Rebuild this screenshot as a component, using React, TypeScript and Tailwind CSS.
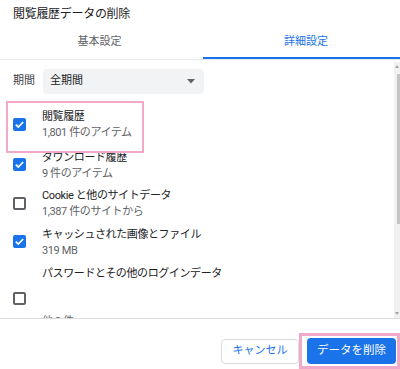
import React from "react";

function Check({ checked }: { checked: boolean }) {
  if (checked) {
    return (
      <div className="w-[13px] h-[13px] shrink-0 rounded-[2px] bg-[#1a73e8] flex items-center justify-center">
        <svg width="13" height="13" viewBox="0 0 13 13">
          <polyline points="2.8,6.6 5.3,9 10.2,4" fill="none" stroke="#ffffff" strokeWidth="1.7" />
        </svg>
      </div>
    );
  }
  return <div className="w-[13px] h-[13px] shrink-0 rounded-[2px] border-2 border-[#5f6368] bg-white" />;
}

function Item({ checked, label, sub, pl = "pl-[13px]" }: { checked: boolean; label: string; sub: string; pl?: string }) {
  return (
    <div className={`flex items-center shrink-0 h-[38.5px] py-[3px] ${pl}`}>
      <Check checked={checked} />
      <div className="ml-[16px] flex flex-col pt-[2px]">
        <div className="h-[16px] leading-[16px] text-[11px] text-[#202124] tracking-[-0.4px] whitespace-nowrap">{label}</div>
        <div className="h-[16px] leading-[16px] text-[11px] text-[#5f6368] tracking-[-0.4px] whitespace-nowrap">{sub}</div>
      </div>
    </div>
  );
}

export default function App() {
  return (
    <div className="w-[400px] h-[369px] overflow-hidden bg-white font-['Roboto','Noto_Sans_CJK_JP',sans-serif] flex flex-col">
      <div className="h-[28px] shrink-0 pl-[13px] flex items-center text-[12px] text-[#202124] tracking-[-0.3px]">
        閲覧履歴データの削除
      </div>
      <div className="h-[31px] shrink-0 flex">
        <div className="w-[203px] flex items-center justify-center pr-[4px] text-[11px] text-[#5f6368] border-b-2 border-transparent">
          基本設定
        </div>
        <div className="flex-1 flex items-center justify-center pl-[9px] text-[11px] text-[#1a73e8] border-b-2 border-[#1a73e8]">
          詳細設定
        </div>
      </div>
      <div className="h-px shrink-0 bg-[#e8eaed]" />
      <div className="relative h-[258px] shrink-0 overflow-hidden flex">
        <div className="w-[394px] flex flex-col">
          <div className="mt-[9px] h-[25px] shrink-0 flex items-center">
            <div className="w-[43px] pl-[13px] text-[11px] text-[#3c4043]">期間</div>
            <div className="w-[161px] h-[25px] rounded-[4px] bg-[#f1f3f4] flex items-center justify-between pl-[7px] pr-[9px]">
              <span className="text-[11px] text-[#202124]">全期間</span>
              <svg width="8" height="5" viewBox="0 0 8 5">
                <polygon points="0,0 8,0 4,4.5" fill="#5f6368" />
              </svg>
            </div>
          </div>
          <div className="relative z-10 shrink-0 mt-[7px] ml-[6px] w-[138px] h-[52px] border-2 border-[#f2a9c9] bg-white pt-[2px]">
            <Item checked label="閲覧履歴" sub="1,801 件のアイテム" pl="pl-[5px]" />
          </div>
          <div className="mt-[-7.5px] shrink-0">
            <Item checked label="ダウンロード履歴" sub="9 件のアイテム" />
          </div>
          <Item checked={false} label="Cookie と他のサイトデータ" sub="1,387 件のサイトから" />
          <Item checked label="キャッシュされた画像とファイル" sub="319 MB" />
          <div className="flex items-start shrink-0 pl-[13px] pt-[3px]">
            <div className="mt-[28px]">
              <Check checked={false} />
            </div>
            <div className="ml-[16px] flex flex-col pt-[2px]">
              <div className="h-[16px] leading-[16px] text-[11px] text-[#202124] tracking-[-0.4px] whitespace-nowrap">
                パスワードとその他のログインデータ
              </div>
              <div className="h-[32px]" />
              <div className="h-[16px] leading-[16px] text-[11px] text-[#5f6368] tracking-[-0.4px] whitespace-nowrap">
                他 3 件
              </div>
            </div>
          </div>
        </div>
        <div className="w-[6px] mt-[2px] bg-[#f1f1f1] flex flex-col items-end justify-between py-[3px]">
          <svg width="4" height="3" viewBox="0 0 4 3" className="mr-[1px]">
            <polygon points="0,3 4,3 2,0" fill="#a3a3a3" />
          </svg>
          <div className="flex-1 mt-[6px] mb-[88px] w-[3px] bg-[#c4c4c4]" />
          <svg width="4" height="3" viewBox="0 0 4 3" className="mr-[1px]">
            <polygon points="0,0 4,0 2,3" fill="#a3a3a3" />
          </svg>
        </div>
      </div>
      <div className="h-px shrink-0 bg-[#dadce0]" />
      <div className="flex justify-end items-center pt-[14px]">
        <button className="w-[78px] h-[25px] rounded-[4px] border border-[#dadce0] bg-white text-[11px] text-[#1a73e8] flex items-center justify-center">
          キャンセル
        </button>
        <div className="border-[3px] border-[#f2a9c9] pl-[5px] pr-[1px] py-[2px]">
          <button className="w-[89px] h-[26px] rounded-[4px] bg-[#1a73e8] text-[11.5px] text-white flex items-center justify-center">
            データを削除
          </button>
        </div>
      </div>
    </div>
  );
}
